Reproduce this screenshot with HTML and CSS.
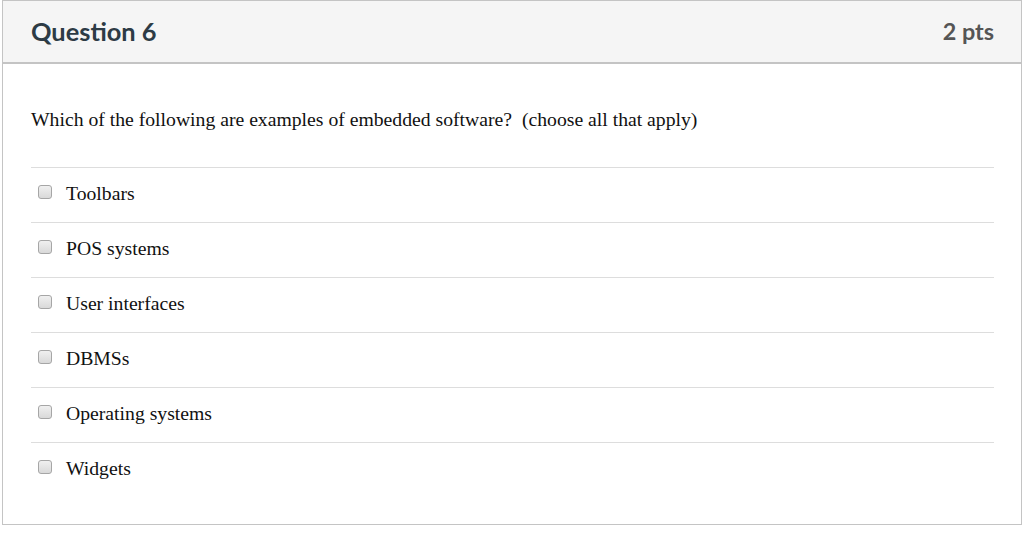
FILE: index.html
```html
<!DOCTYPE html>
<html lang="en">
<head>
    <meta charset="UTF-8">
    <title>Question 6</title>
    <link rel="stylesheet" href="styles.css">
</head>
<body>
    <div class="question">
        <div class="header">
            <h2 class="title">Question 6</h2>
            <span class="points">2 pts</span>
        </div>
        <div class="content">
            <p class="text">Which of the following are examples of embedded software?&nbsp; (choose all that apply)</p>
            <div class="answers">
                <label class="answer"><input type="checkbox"><span>Toolbars</span></label>
                <label class="answer"><input type="checkbox"><span>POS systems</span></label>
                <label class="answer"><input type="checkbox"><span>User interfaces</span></label>
                <label class="answer"><input type="checkbox"><span>DBMSs</span></label>
                <label class="answer"><input type="checkbox"><span>Operating systems</span></label>
                <label class="answer"><input type="checkbox"><span>Widgets</span></label>
            </div>
        </div>
    </div>
</body>
</html>
```

FILE: styles.css
```css
* {
    margin: 0;
    padding: 0;
    box-sizing: border-box;
}

body {
    background: #fff;
    padding: 0 2px 0 2px;
}

.question {
    width: 1020px;
    height: 525px;
    border: 1px solid #c4c4c4;
    background: #fff;
}

.header {
    height: 63px;
    background: #f5f5f5;
    border-bottom: 2px solid #c4c4c4;
    display: flex;
    align-items: center;
    justify-content: space-between;
    padding: 0 27px 2px 28px;
    font-family: Lato, "Open Sans", sans-serif;
    font-weight: bold;
}

.title {
    font-size: 25.4px;
    color: #2d3b45;
}

.points {
    font-size: 23.4px;
    color: #555;
}

.content {
    padding: 43px 27px 0 28px;
    font-family: "Liberation Serif", "Times New Roman", serif;
    font-size: 19.7px;
    color: #111;
}

.text {
    line-height: 24px;
    margin-bottom: 36px;
}

.answer {
    display: flex;
    align-items: center;
    height: 55px;
    border-top: 1px solid #ddd;
    padding: 0 0 4px 7px;
}

.answer input {
    appearance: none;
    width: 14px;
    height: 14px;
    border: 1px solid #a6a6a6;
    border-radius: 3px;
    background: linear-gradient(#f0f0f0, #d9d9d9);
    margin: 0 14px 2px 0;
}
```
